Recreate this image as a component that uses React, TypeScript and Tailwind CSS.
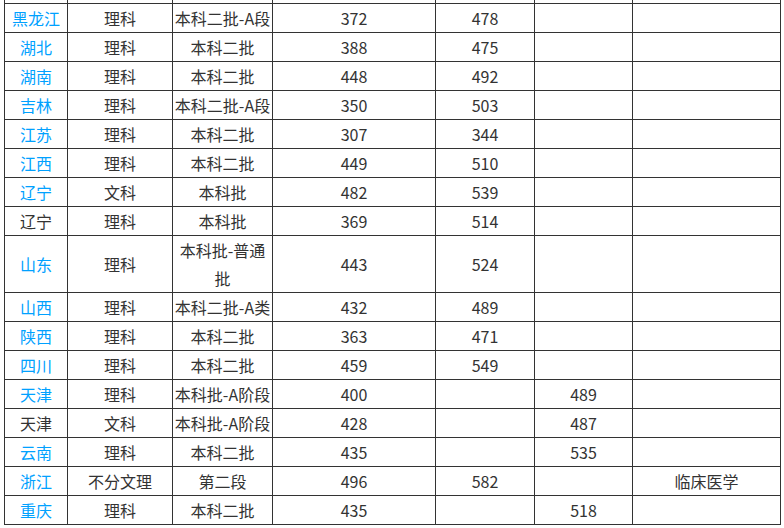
import React from "react";

type Row = { p: string; blue: boolean; c: string[] };

const rows: Row[] = [
  { p: "黑龙江", blue: true, c: ["理科", "本科二批-A段", "372", "478", "", ""] },
  { p: "湖北", blue: true, c: ["理科", "本科二批", "388", "475", "", ""] },
  { p: "湖南", blue: true, c: ["理科", "本科二批", "448", "492", "", ""] },
  { p: "吉林", blue: true, c: ["理科", "本科二批-A段", "350", "503", "", ""] },
  { p: "江苏", blue: true, c: ["理科", "本科二批", "307", "344", "", ""] },
  { p: "江西", blue: true, c: ["理科", "本科二批", "449", "510", "", ""] },
  { p: "辽宁", blue: true, c: ["文科", "本科批", "482", "539", "", ""] },
  { p: "辽宁", blue: false, c: ["理科", "本科批", "369", "514", "", ""] },
  { p: "山东", blue: true, c: ["理科", "本科批-普通批", "443", "524", "", ""] },
  { p: "山西", blue: true, c: ["理科", "本科二批-A类", "432", "489", "", ""] },
  { p: "陕西", blue: true, c: ["理科", "本科二批", "363", "471", "", ""] },
  { p: "四川", blue: true, c: ["理科", "本科二批", "459", "549", "", ""] },
  { p: "天津", blue: true, c: ["理科", "本科批-A阶段", "400", "", "489", ""] },
  { p: "天津", blue: false, c: ["文科", "本科批-A阶段", "428", "", "487", ""] },
  { p: "云南", blue: true, c: ["理科", "本科二批", "435", "", "535", ""] },
  { p: "浙江", blue: true, c: ["不分文理", "第二段", "496", "582", "", "临床医学"] },
  { p: "重庆", blue: true, c: ["理科", "本科二批", "435", "", "518", ""] },
];

const cell =
  "border-r border-b border-[#333333] flex items-center justify-center text-center leading-[28px] px-0";

export default function App() {
  return (
    <div
      className="bg-white w-[784px] h-[528px] overflow-hidden text-[16px] text-[#333333]"
      style={{ fontFamily: '"Noto Sans CJK SC", "Noto Sans", sans-serif' }}
    >
      <div className="ml-[4px] mt-[-26px] w-[777px] border-l border-t border-[#333333] grid grid-cols-[63px_105px_100px_163px_99px_98px_148px]">
        {Array.from({ length: 7 }).map((_, i) => (
          <div key={"h" + i} className={cell + " h-[29px]"}></div>
        ))}
        {rows.map((r, ri) => (
          <React.Fragment key={ri}>
            <div className={cell + (r.blue ? " text-[#00a1ff]" : " text-[#333333]")}>{r.p}</div>
            {r.c.map((t, ci) => (
              <div key={ci} className={cell}>
                {t}
              </div>
            ))}
          </React.Fragment>
        ))}
      </div>
    </div>
  );
}
